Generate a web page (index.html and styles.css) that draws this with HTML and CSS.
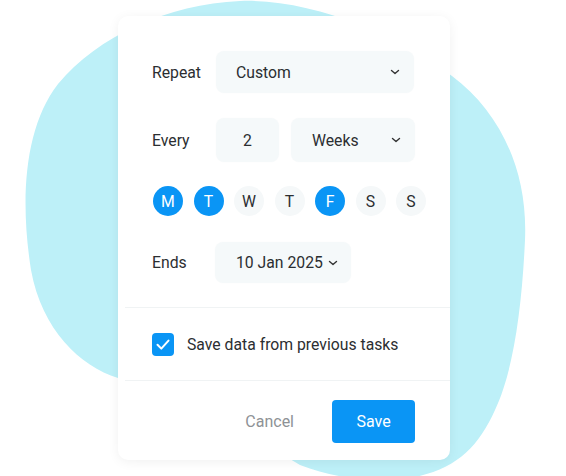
FILE: index.html
```html
<!DOCTYPE html>
<html>
<head>
<meta charset="utf-8">
<link rel="stylesheet" href="styles.css">
</head>
<body>
<div class="stage">
  <svg class="blob" width="566" height="476" viewBox="0 0 566 476" aria-hidden="true">
    <path d="M240,1 C310,-2 400,35 452,76 C500,112 528,170 525,240 C522,305 514,370 495,410 C478,448 455,470 410,478 C380,483 340,480 300,465 L200,405 C160,395 140,385 118,378 C80,366 42,330 31,270 C20,200 24,128 58,84 C98,36 168,4 240,1 Z" fill="#bdf0f8"/>
  </svg>
  <div class="card">
    <div class="body">
      <div class="row r1">
        <span class="label">Repeat</span>
        <div class="select wide"><span>Custom</span><svg class="chev" width="10" height="6" viewBox="0 0 10 6"><path d="M1.5 1.5 L5 4.5 L8.5 1.5" fill="none" stroke="#333" stroke-width="1.4" stroke-linecap="round" stroke-linejoin="round"/></svg></div>
      </div>
      <div class="row r2">
        <span class="label">Every</span>
        <div class="select num"><span>2</span></div>
        <div class="select weeks"><span>Weeks</span><svg class="chev" width="10" height="6" viewBox="0 0 10 6"><path d="M1.5 1.5 L5 4.5 L8.5 1.5" fill="none" stroke="#333" stroke-width="1.4" stroke-linecap="round" stroke-linejoin="round"/></svg></div>
      </div>
      <div class="days">
        <span class="day on">M</span>
        <span class="day on">T</span>
        <span class="day">W</span>
        <span class="day">T</span>
        <span class="day on">F</span>
        <span class="day">S</span>
        <span class="day">S</span>
      </div>
      <div class="row r4">
        <span class="label">Ends</span>
        <div class="select date"><span>10 Jan 2025</span><svg class="chev" width="10" height="6" viewBox="0 0 10 6"><path d="M1.5 1.5 L5 4.5 L8.5 1.5" fill="none" stroke="#333" stroke-width="1.4" stroke-linecap="round" stroke-linejoin="round"/></svg></div>
      </div>
    </div>
    <div class="divider"></div>
    <div class="check-row">
      <span class="box"><svg width="22" height="23" viewBox="0 0 22 23"><path d="M5.5 11.8 L9.3 15.6 L16.5 7.6" fill="none" stroke="#fff" stroke-width="2" stroke-linecap="round" stroke-linejoin="round"/></svg></span>
      <span class="check-text">Save data from previous tasks</span>
    </div>
    <div class="divider"></div>
    <div class="footer">
      <span class="cancel">Cancel</span>
      <span class="save">Save</span>
    </div>
  </div>
</div>
</body>
</html>
```

FILE: styles.css
```css
html, body {
  margin: 0;
  padding: 0;
  background: #ffffff;
}
body {
  width: 566px;
  height: 476px;
  overflow: hidden;
  font-family: Roboto, "Liberation Sans", sans-serif;
  color: #2b2e31;
  white-space: nowrap;
}
.stage {
  position: relative;
  width: 566px;
  height: 476px;
  padding-top: 16px;
  box-sizing: border-box;
}
.blob {
  position: absolute;
  left: 0;
  top: 0;
}
.card {
  position: relative;
  z-index: 1;
  margin-left: 118px;
  width: 332px;
  height: 444px;
  background: #ffffff;
  border-radius: 10px;
  box-shadow: 0 2px 12px rgba(0, 0, 0, 0.06);
  display: flex;
  flex-direction: column;
}
.body {
  padding: 35px 0 0 34px;
  display: flex;
  flex-direction: column;
}
.row {
  display: flex;
  align-items: center;
}
.label {
  width: 64px;
  font-size: 15.75px;
}
.r4 .label { width: 63px; }
.select {
  background: #f5f9fa;
  border-radius: 8px;
  display: flex;
  align-items: center;
  font-size: 15.75px;
  box-sizing: border-box;
  box-shadow: 0 0 2px rgba(0, 0, 0, 0.02);
}
.chev { flex-shrink: 0; }
.wide {
  width: 198px;
  height: 42px;
  padding: 0 14px 0 20px;
  justify-content: space-between;
}
.r2 { margin-top: 25px; gap: 12px; }
.r2 .label { margin-right: -12px; }
.num {
  width: 63px;
  height: 44px;
  justify-content: center;
}
.weeks {
  width: 124px;
  height: 44px;
  padding: 0 14px 0 21px;
  justify-content: space-between;
}
.days {
  margin-top: 24px;
  display: flex;
  gap: 10.5px;
  padding-left: 1px;
}
.day {
  width: 30px;
  height: 30px;
  border-radius: 50%;
  background: #f5f8f9;
  display: flex;
  align-items: center;
  justify-content: center;
  font-size: 15.75px;
}
.day.on {
  background: #0a95f5;
  color: #ffffff;
}
.r4 { margin-top: 26px; }
.date {
  width: 136px;
  height: 41px;
  padding: 0 0 0 21px;
  gap: 5px;
}
.divider {
  margin-left: 7px;
  height: 1px;
  background: #f0f3f4;
}
.body + .divider { margin-top: 24px; }
.check-row {
  height: 72px;
  display: flex;
  align-items: center;
  padding-left: 34px;
  gap: 13px;
}
.box {
  width: 22px;
  height: 23px;
  border-radius: 4px;
  background: #0a95f5;
  display: flex;
}
.check-text {
  font-size: 15.75px;
}
.footer {
  flex: 1;
  display: flex;
  align-items: center;
  justify-content: flex-end;
  padding-right: 35px;
  padding-top: 2px;
  gap: 38px;
}
.cancel {
  font-size: 16px;
  color: #8e9296;
}
.save {
  width: 83px;
  height: 43px;
  border-radius: 4px;
  background: #0a95f5;
  color: #ffffff;
  font-size: 16px;
  display: flex;
  align-items: center;
  justify-content: center;
}
```
